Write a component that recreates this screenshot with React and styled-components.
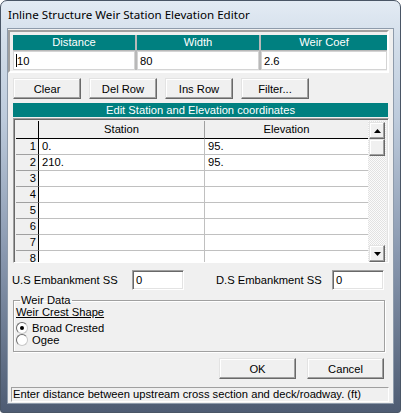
import React from "react";
import styled, { createGlobalStyle } from "styled-components";

const GlobalStyle = createGlobalStyle`
  html, body { margin: 0; padding: 0; background: #ffffff; }
  body { font-family: "Liberation Sans", Arial, sans-serif; font-size: 11px; color: #000; }
`;

const TEAL = "#008080";
const FS = "11.2px";

const Window = styled.div`
  width: 401px;
  height: 413px;
  box-sizing: border-box;
  border: 1px solid #4a5666;
  border-radius: 7px 7px 3px 3px;
  background: linear-gradient(to bottom, #e3ebf4 0px, #d3deea 40px, #bccadb 120px, #8a99b0 250px, #4d5b72 413px);
  display: flex;
  flex-direction: column;
  overflow: hidden;
`;

const TitleBar = styled.div`
  height: 27px;
  display: flex;
  align-items: center;
  padding-left: 7px;
  flex-shrink: 0;
`;

const TitleText = styled.span`
  font-family: "Noto Sans", "Liberation Sans", sans-serif;
  font-size: 11.6px;
  color: #000;
`;

const Client = styled.div`
  margin: 0 6px 8px 6px;
  flex: 1;
  background: #f0f0f0;
  border: 1px solid #8e9bab;
  display: flex;
  flex-direction: column;
  padding: 1px 0 0 0;
`;

const TopPanel = styled.div`
  width: 381px;
  box-sizing: border-box;
  border-style: solid;
  border-width: 2px;
  border-color: #a0a0a0 #ffffff #ffffff #a0a0a0;
  padding: 3px 1px 0 3px;
  height: 43px;
`;

const ParamGrid = styled.div`
  display: grid;
  grid-template-columns: 122px 122px 126px;
  grid-template-rows: 15px 19px;
  column-gap: 2px;
  row-gap: 1px;
  background: #b9b9b9;
  width: 374px;
`;

const HeadCell = styled.div`
  background: ${TEAL};
  color: #fff;
  text-align: center;
  line-height: 15px;
  font-size: ${FS};
`;

const ValueCell = styled.div`
  background: #fff;
  box-sizing: border-box;
  border: 1px solid #d4d4d4;
  padding-left: 2px;
  font-size: ${FS};
  display: flex;
  align-items: center;
`;

const Caret = styled.span`
  display: inline-block;
  width: 1px;
  height: 13px;
  background: #000;
`;

const ButtonRow = styled.div`
  display: flex;
  gap: 8px;
  margin: 5px 0 0 5px;
`;

const Button = styled.button`
  width: ${(p) => p.$w || 68}px;
  height: 21px;
  padding: 0;
  font-family: "Liberation Sans", Arial, sans-serif;
  font-size: ${FS};
  color: #000;
  background: #f0f0f0;
  border-style: solid;
  border-width: 1px;
  border-color: #e3e3e3 #696969 #696969 #e3e3e3;
  box-shadow: inset -1px -1px 0 #a0a0a0, inset 1px 1px 0 #ffffff;
`;

const TealBar = styled.div`
  margin: 4px 0 0 5px;
  width: 375px;
  height: 14px;
  background: ${TEAL};
  color: #fff;
  font-size: ${FS};
  line-height: 14px;
  text-align: center;
`;

const TableFrame = styled.div`
  margin: 1px 0 0 5px;
  width: 376px;
  height: 145px;
  box-sizing: border-box;
  border-style: solid;
  border-width: 1px;
  border-color: #a0a0a0 #ffffff #ffffff #a0a0a0;
  box-shadow: inset 1px 1px 0 #696969, inset -1px -1px 0 #e3e3e3;
  padding: 2px;
  display: flex;
`;

const Table = styled.div`
  width: 353px;
  height: 141px;
  overflow: hidden;
  background: #fff;
  display: grid;
  grid-template-columns: 23px 166px 164px;
  grid-auto-rows: 16px;
  grid-template-rows: 18px;
  align-content: start;
`;

const HeadNum = styled.div`
  background: #f0f0f0;
  border-right: 1px solid #000;
  border-bottom: 1px solid #000;
`;

const ColHead = styled.div`
  background: #f0f0f0;
  border-bottom: 1px solid #000;
  border-right: 1px solid ${(p) => (p.$last ? "#000" : "#a0a0a0")};
  text-align: center;
  line-height: 17px;
  font-size: ${FS};
`;

const RowNum = styled.div`
  background: #f0f0f0;
  border-right: 1px solid #000;
  border-bottom: 1px solid #a0a0a0;
  text-align: right;
  padding-right: 2px;
  line-height: 15px;
  font-size: ${FS};
`;

const Cell = styled.div`
  border-bottom: 1px solid #c0c0c0;
  border-right: 1px solid ${(p) => (p.$last ? "#000" : "#c0c0c0")};
  padding-left: 3px;
  line-height: 15px;
  font-size: ${FS};
`;

const ScrollBar = styled.div`
  width: 18px;
  height: 141px;
  display: flex;
  flex-direction: column;
  background-color: #f4f4f4;
  background-image: repeating-conic-gradient(#e2e2e2 0 25%, #fbfbfb 0 50%);
  background-size: 2px 2px;
`;

const ScrollBtn = styled.div`
  height: 17px;
  box-sizing: border-box;
  margin: 1px 1px 0 1px;
  background: #f0f0f0;
  border-style: solid;
  border-width: 1px;
  border-color: #e3e3e3 #696969 #696969 #e3e3e3;
  box-shadow: inset -1px -1px 0 #a0a0a0, inset 1px 1px 0 #fff;
  display: flex;
  align-items: center;
  justify-content: center;
  ${(p) => p.$down && "margin-top: auto; margin-bottom: 0;"}
`;

const Thumb = styled(ScrollBtn)`
  margin-top: 0;
`;

const EmbRow = styled.div`
  display: flex;
  align-items: center;
  margin: 6px 0 0 4px;
  height: 21px;
`;

const Label = styled.span`
  font-size: ${FS};
  width: ${(p) => p.$w}px;
  padding-left: ${(p) => p.$pl || 0}px;
`;

const SmallInput = styled.div`
  width: 52px;
  height: 20px;
  box-sizing: border-box;
  background: #fff;
  border-style: solid;
  border-width: 1px;
  border-color: #a0a0a0 #ffffff #ffffff #a0a0a0;
  box-shadow: inset 1px 1px 0 #696969, inset -1px -1px 0 #e3e3e3;
  padding-left: 3px;
  line-height: 18px;
  font-size: ${FS};
`;

const GroupBox = styled.fieldset`
  margin: 5px 0 0 5px;
  width: 372px;
  height: 57px;
  box-sizing: border-box;
  border: 1px solid #a0a0a0;
  box-shadow: inset 1px 1px 0 #fff, 1px 1px 0 #fff;
  padding: 0 0 0 2px;
`;

const Legend = styled.legend`
  font-size: ${FS};
  padding: 0 1px;
  margin-left: 4px;
  line-height: 11px;
`;

const SubHead = styled.div`
  font-size: ${FS};
  text-decoration: underline;
  line-height: 13px;
`;

const RadioRow = styled.label`
  display: flex;
  align-items: center;
  gap: 4px;
  font-size: ${FS};
  height: 12px;
  margin-top: ${(p) => p.$mt || 0}px;
`;

const RadioCircle = styled.span`
  width: 12px;
  height: 12px;
  box-sizing: border-box;
  border-radius: 50%;
  border: 1px solid #6b6b6b;
  border-right-color: #c8c8c8;
  border-bottom-color: #c8c8c8;
  background: #fff;
  display: flex;
  align-items: center;
  justify-content: center;
  &::after {
    content: "";
    width: 4px;
    height: 4px;
    border-radius: 50%;
    background: ${(p) => (p.$on ? "#000" : "transparent")};
  }
`;

const DialogButtons = styled.div`
  display: flex;
  justify-content: flex-end;
  gap: 11px;
  margin: 6px 9px 0 0;
`;

const StatusBar = styled.div`
  margin: 8px 0 0 3px;
  width: 378px;
  height: 15px;
  box-sizing: border-box;
  border-style: solid;
  border-width: 1px;
  border-color: #a0a0a0 #ffffff #ffffff #a0a0a0;
  font-size: ${FS};
  line-height: 13px;
  padding-left: 1px;
  white-space: nowrap;
  overflow: hidden;
`;

const Arrow = ({ down }) => (
  <svg width="7" height="4" viewBox="0 0 7 4">
    <path d={down ? "M0 0h7L3.5 4z" : "M3.5 0L7 4H0z"} fill="#000" />
  </svg>
);

const params = [
  { name: "Distance", value: "10" },
  { name: "Width", value: "80" },
  { name: "Weir Coef", value: "2.6" },
];

const rows = [
  ["0.", "95."],
  ["210.", "95."],
  ["", ""],
  ["", ""],
  ["", ""],
  ["", ""],
  ["", ""],
  ["", ""],
];

export default function App() {
  return (
    <>
      <GlobalStyle />
      <Window>
        <TitleBar>
          <TitleText>Inline Structure Weir Station Elevation Editor</TitleText>
        </TitleBar>
        <Client>
          <TopPanel>
            <ParamGrid>
              {params.map((p) => (
                <HeadCell key={p.name}>{p.name}</HeadCell>
              ))}
              {params.map((p, i) => (
                <ValueCell key={p.name}>
                  {i === 0 && <Caret />}
                  {p.value}
                </ValueCell>
              ))}
            </ParamGrid>
          </TopPanel>

          <ButtonRow>
            <Button>Clear</Button>
            <Button>Del Row</Button>
            <Button>Ins Row</Button>
            <Button>Filter...</Button>
          </ButtonRow>

          <TealBar>Edit Station and Elevation coordinates</TealBar>

          <TableFrame>
            <Table>
              <HeadNum />
              <ColHead>Station</ColHead>
              <ColHead $last>Elevation</ColHead>
              {rows.map((r, i) => (
                <React.Fragment key={i}>
                  <RowNum>{i + 1}</RowNum>
                  <Cell>{r[0]}</Cell>
                  <Cell $last>{r[1]}</Cell>
                </React.Fragment>
              ))}
            </Table>
            <ScrollBar>
              <ScrollBtn>
                <Arrow />
              </ScrollBtn>
              <Thumb />
              <ScrollBtn $down>
                <Arrow down />
              </ScrollBtn>
            </ScrollBar>
          </TableFrame>

          <EmbRow>
            <Label $w={120}>U.S Embankment SS</Label>
            <SmallInput>0</SmallInput>
            <Label $w={116} $pl={32}>D.S Embankment SS</Label>
            <SmallInput>0</SmallInput>
          </EmbRow>

          <GroupBox>
            <Legend>Weir Data</Legend>
            <SubHead>Weir Crest Shape</SubHead>
            <RadioRow $mt={3}>
              <RadioCircle $on />
              Broad Crested
            </RadioRow>
            <RadioRow>
              <RadioCircle />
              Ogee
            </RadioRow>
          </GroupBox>

          <DialogButtons>
            <Button $w={77}>OK</Button>
            <Button $w={77}>Cancel</Button>
          </DialogButtons>

          <StatusBar>Enter distance between upstream cross section and deck/roadway. (ft)</StatusBar>
        </Client>
      </Window>
    </>
  );
}
